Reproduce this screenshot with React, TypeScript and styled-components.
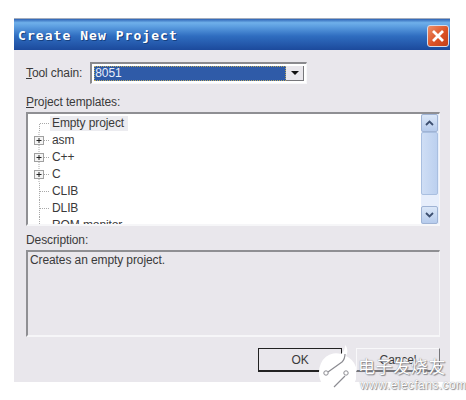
import React from 'react';
import styled, { createGlobalStyle } from 'styled-components';

const GlobalStyle = createGlobalStyle`
  html, body {
    margin: 0;
    padding: 0;
    background: #ffffff;
  }
  * {
    box-sizing: border-box;
  }
`;

const Page = styled.div`
  position: relative;
  width: 466px;
  height: 400px;
  padding: 18px 16px 18px 14px;
  overflow: hidden;
  font-family: 'Liberation Sans', Arial, sans-serif;
  font-size: 12px;
  letter-spacing: -0.1px;
  color: #3a3a3a;
`;

const Dialog = styled.div`
  width: 436px;
  height: 364px;
  display: flex;
  flex-direction: column;
  background: #e9e7ec;
`;

const TitleBar = styled.div`
  height: 32px;
  flex: none;
  display: flex;
  align-items: center;
  justify-content: space-between;
  padding: 1px 1px 0 4px;
  border-top: 1px solid #a4adbd;
  background: linear-gradient(180deg, #2e63b5 0%, #6fb0ea 12%, #5b9de0 25%, #2f6dc0 55%, #1c4a9c 100%);
`;

const TitleText = styled.span`
  font-family: 'DejaVu Sans Mono', monospace;
  font-weight: bold;
  font-size: 13px;
  letter-spacing: 1.05px;
  color: #ffffff;
  text-shadow: 1px 1px 0 #16407f;
`;

const CloseButton = styled.div`
  width: 22px;
  height: 22px;
  margin-top: 1px;
  display: flex;
  align-items: center;
  justify-content: center;
  border: 1px solid #d3dcec;
  border-radius: 3px;
  background: linear-gradient(135deg, #ec8f68 0%, #dc5226 55%, #c23f18 100%);
`;

const Body = styled.div`
  flex: 1;
  display: flex;
  flex-direction: column;
  padding: 12px 10px 0 12px;
`;

const ToolRow = styled.div`
  display: flex;
  align-items: center;
  height: 22px;
  gap: 8px;
`;

const Label = styled.label`
  display: block;
  line-height: 14px;
`;

const Mnemonic = styled.span`
  text-decoration: underline;
`;

const Combo = styled.div`
  width: 217px;
  height: 22px;
  display: flex;
  padding: 2px;
  border: 1px solid #f8f8fa;
  border-top: 2px solid #8a8a8e;
  border-left: 2px solid #8a8a8e;
  background: #ffffff;
`;

const ComboValue = styled.div`
  flex: 1;
  padding-left: 1px;
  line-height: 15px;
  color: #e8eefa;
  background: #2f5ba8;
  outline: 1px dotted #b9a860;
  outline-offset: -1px;
`;

const ComboArrow = styled.div`
  width: 18px;
  display: flex;
  align-items: center;
  justify-content: center;
  background: #e9e7ec;
  border-right: 1px solid #77777b;
  border-bottom: 1px solid #77777b;
`;

const TemplatesLabel = styled(Label)`
  margin-top: 11px;
  margin-bottom: 3px;
`;

const ListBox = styled.div`
  width: 414px;
  height: 114px;
  flex: none;
  display: flex;
  overflow: hidden;
  background: #ffffff;
  border-top: 2px solid #8f8f93;
  border-left: 2px solid #8f8f93;
  border-right: 1px solid #f6f6f8;
  border-bottom: 2px solid #f6f6f8;
`;

const Tree = styled.div`
  flex: 1;
  padding-top: 1px;
  overflow: hidden;
`;

const TreeRow = styled.div`
  height: 17px;
  display: flex;
  align-items: center;
  padding-left: 6px;
`;

const Connector = styled.div`
  width: 16px;
  height: 17px;
  flex: none;
  display: flex;
  align-items: center;
`;

const Selected = styled.span<{ $active?: boolean }>`
  padding: 0 4px 0 2px;
  line-height: 15px;
  background: ${({ $active }) => ($active ? '#ececf0' : 'transparent')};
`;

const ScrollBar = styled.div`
  width: 18px;
  flex: none;
  display: flex;
  flex-direction: column;
  background: #e7eefb;
`;

const ScrollButton = styled.div`
  width: 17px;
  height: 18px;
  flex: none;
  display: flex;
  align-items: center;
  justify-content: center;
  border: 1px solid #9fb3d4;
  border-radius: 2px;
  background: linear-gradient(180deg, #dbe7f8, #b6cbec);
`;

const ScrollThumb = styled.div`
  width: 17px;
  height: 63px;
  flex: none;
  border: 1px solid #a9bfe0;
  border-radius: 2px;
  background: linear-gradient(90deg, #cfdef5, #bcd0ef);
`;

const ScrollTrack = styled.div`
  flex: 1;
`;

const DescriptionLabel = styled(Label)`
  margin-top: 7px;
  margin-bottom: 3px;
`;

const DescriptionBox = styled.div`
  width: 414px;
  height: 87px;
  flex: none;
  padding: 1px 2px;
  line-height: 15px;
  border-top: 2px solid #8f8f93;
  border-left: 2px solid #8f8f93;
  border-right: 1px solid #f6f6f8;
  border-bottom: 2px solid #f6f6f8;
`;

const ButtonRow = styled.div`
  display: flex;
  justify-content: flex-end;
  gap: 14px;
  margin-top: 11px;
`;

const DialogButton = styled.div<{ $default?: boolean }>`
  width: 84px;
  height: 24px;
  display: flex;
  align-items: center;
  justify-content: center;
  border: 1px solid ${({ $default }) => ($default ? '#222222' : '#f8f8fa')};
  border-right-color: ${({ $default }) => ($default ? '#222222' : '#77777b')};
  border-bottom: 2px solid ${({ $default }) => ($default ? '#222222' : '#77777b')};
`;

const Watermark = styled.div`
  position: absolute;
  left: 316px;
  top: 344px;
  display: flex;
  align-items: flex-start;
  letter-spacing: normal;
`;

const WatermarkDisc = styled.svg`
  display: block;
  flex: none;
  margin-right: 2px;
`;

const WatermarkText = styled.div`
  display: flex;
  flex-direction: column;
  align-items: flex-start;
  margin-top: 11px;
`;

const WatermarkName = styled.span`
  font-family: 'Noto Sans CJK SC', sans-serif;
  font-size: 17px;
  line-height: 21px;
  letter-spacing: 0.6px;
  color: #ffffff;
  text-shadow: 0 0 1px #6d6d73, 1px 1px 1px #8a8a90;
`;

const WatermarkUrl = styled.span`
  margin-top: 2px;
  margin-left: 2px;
  font-size: 12px;
  line-height: 14px;
  letter-spacing: 0.45px;
  color: #ffffff;
  text-shadow: 0 0 1px #77777d, 1px 1px 1px #8a8a90;
`;

const dots = '#a8a8a8';

const PlusBox = () => (
  <svg width="16" height="17" viewBox="0 0 16 17">
    <path d="M5 0v4M5 13v4" stroke={dots} strokeDasharray="1 1" />
    <rect x="0.5" y="4.5" width="9" height="8" fill="#f4f4f4" stroke="#a0a0a0" />
    <path d="M2.5 8.5h5M5 6v5" stroke="#222222" />
    <path d="M10 8.5h5" stroke={dots} strokeDasharray="1 1" />
  </svg>
);

const Branch = ({ first }: { first?: boolean }) => (
  <svg width="16" height="17" viewBox="0 0 16 17">
    <path d={first ? 'M5.5 9v8M6 8.5h9' : 'M5.5 0v17M6 8.5h9'} stroke={dots} strokeDasharray="1 1" />
  </svg>
);

const templates = [
  { name: 'Empty project', expandable: false, active: true },
  { name: 'asm', expandable: true },
  { name: 'C++', expandable: true },
  { name: 'C', expandable: true },
  { name: 'CLIB', expandable: false },
  { name: 'DLIB', expandable: false },
  { name: 'ROM monitor', expandable: false },
];

const App = () => {
  return (
    <Page>
      <GlobalStyle />
      <Dialog>
        <TitleBar>
          <TitleText>Create New Project</TitleText>
          <CloseButton>
            <svg width="14" height="14" viewBox="0 0 14 14">
              <path d="M2 2l10 10M12 2L2 12" stroke="#ffffff" strokeWidth="2.8" />
            </svg>
          </CloseButton>
        </TitleBar>
        <Body>
          <ToolRow>
            <Label>
              <Mnemonic>T</Mnemonic>ool chain:
            </Label>
            <Combo>
              <ComboValue>8051</ComboValue>
              <ComboArrow>
                <svg width="8" height="4" viewBox="0 0 8 4">
                  <path d="M0 0h8L4 4z" fill="#111111" />
                </svg>
              </ComboArrow>
            </Combo>
          </ToolRow>
          <TemplatesLabel>
            <Mnemonic>P</Mnemonic>roject templates:
          </TemplatesLabel>
          <ListBox>
            <Tree>
              {templates.map((item) => (
                <TreeRow key={item.name}>
                  <Connector>
                    {item.expandable ? <PlusBox /> : <Branch first={item.active} />}
                  </Connector>
                  <Selected $active={item.active}>{item.name}</Selected>
                </TreeRow>
              ))}
            </Tree>
            <ScrollBar>
              <ScrollButton>
                <svg width="9" height="6" viewBox="0 0 9 6">
                  <path d="M1 5l3.5-3.5L8 5" fill="none" stroke="#3d4f70" strokeWidth="1.8" />
                </svg>
              </ScrollButton>
              <ScrollThumb />
              <ScrollTrack />
              <ScrollButton>
                <svg width="9" height="6" viewBox="0 0 9 6">
                  <path d="M1 1l3.5 3.5L8 1" fill="none" stroke="#3d4f70" strokeWidth="1.8" />
                </svg>
              </ScrollButton>
            </ScrollBar>
          </ListBox>
          <DescriptionLabel>Description:</DescriptionLabel>
          <DescriptionBox>Creates an empty project.</DescriptionBox>
          <ButtonRow>
            <DialogButton $default>OK</DialogButton>
            <DialogButton>Cancel</DialogButton>
          </ButtonRow>
        </Body>
      </Dialog>
      <Watermark>
        <WatermarkDisc width="40" height="50" viewBox="0 0 40 50">
          <path d="M3 28a17 19 0 0 1 22-18c3-2 4-6 4-9 3 3 3 8 1 11a19 19 0 1 1-27 16z" fill="#ffffff" />
          <path
            d="M12 28l14-10c2-2 3-4 3-8M18 43l11-11"
            fill="none"
            stroke="#8c8c92"
            strokeWidth="1.2"
          />
          <circle cx="10" cy="29" r="2.2" fill="#ffffff" stroke="#8c8c92" />
          <circle cx="30" cy="29" r="2.2" fill="#ffffff" stroke="#8c8c92" />
        </WatermarkDisc>
        <WatermarkText>
          <WatermarkName>电子发烧友</WatermarkName>
          <WatermarkUrl>www.elecfans.com</WatermarkUrl>
        </WatermarkText>
      </Watermark>
    </Page>
  );
};

export default App;
